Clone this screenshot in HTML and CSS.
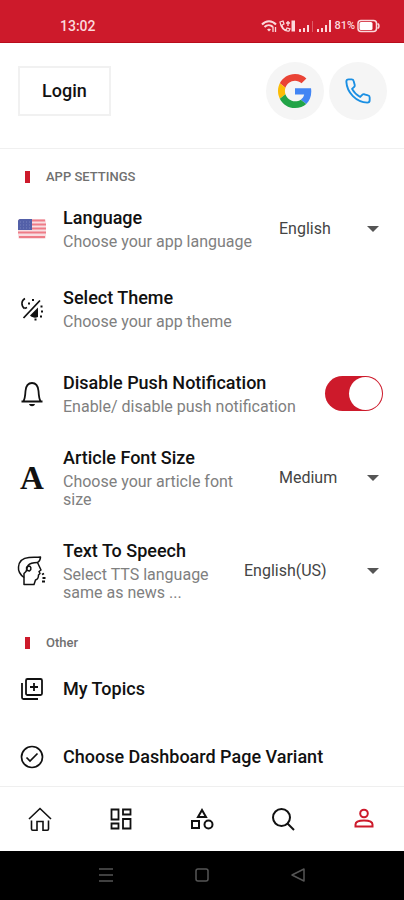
FILE: index.html
```html
<!DOCTYPE html>
<html lang="en">
<head>
    <meta charset="UTF-8">
    <meta name="viewport" content="width=device-width, initial-scale=1.0">
    <title>App Settings</title>
    <link rel="stylesheet" href="styles.css">
</head>
<body>
    <div class="status-bar">
        <span class="time">13:02</span>
        <div class="status-icons">
            <svg width="16" height="14" viewBox="0 0 16 14" fill="none" stroke="#fbd9dc" stroke-width="2">
                <path d="M1 5.500C5 1 11 1 15 5.500M3.500 8C6 5.500 9.500 5.500 12 8"/>
                <path d="M6 10.500l2 2 2-2-2-1z" fill="#fbd9dc" stroke="none"/>
                <path d="M12 8v5M14.500 8v5" stroke-width="1.300"/>
            </svg>
            <svg width="17" height="14" viewBox="0 0 17 14" fill="none" stroke="#fbd9dc" stroke-width="1.800">
                <path d="M1 3l3-1 1 3-2 1c.5 3 2 4.500 4 5l1-2 3 1-1 2c-5 .5-8-3-9-9z" stroke-width="1.300"/>
                <path d="M7 4h4M9 2v5" stroke-width="1.400"/>
                <path d="M12.500 1.500h3.500v11h-3.500z" fill="#fbd9dc" stroke="none"/>
            </svg>
            <svg width="16" height="14" viewBox="0 0 16 14" fill="#fbd9dc">
                <path d="M1 10h2v3H1zM5 9h2v4H5zM9 6h2v7H9z"/>
                <path d="M14 2h1v11h-1z" opacity=".35"/>
            </svg>
            <svg width="16" height="14" viewBox="0 0 16 14" fill="#fbd9dc">
                <path d="M1 10h2v3H1zM5 9h2v4H5zM9 6h2v7H9zM13 1h2v12h-2z"/>
            </svg>
            <span class="percent">81%</span>
            <svg width="23" height="14" viewBox="0 0 23 14">
                <rect x="1" y="1.500" width="18.500" height="11" rx="3" fill="none" stroke="#fbd9dc" stroke-width="1.500"/>
                <rect x="2.500" y="3" width="13" height="8" rx="1.500" fill="#fff"/>
                <path d="M20.500 4.500c2 1 2 4 0 5" fill="none" stroke="#fbd9dc" stroke-width="1.500"/>
            </svg>
        </div>
    </div>

    <header class="header">
        <button class="login">Login</button>
        <div class="social">
            <button class="round" aria-label="Sign in with Google">
                <svg width="34" height="34" viewBox="0 0 48 48">
                    <path fill="#ea4335" d="M24 9.500c3.540 0 6.710 1.220 9.210 3.600l6.850-6.850C35.900 2.380 30.470 0 24 0 14.620 0 6.510 5.380 2.560 13.220l7.980 6.190C12.430 13.720 17.740 9.500 24 9.500z"/>
                    <path fill="#4285f4" d="M46.980 24.550c0-1.570-.15-3.090-.38-4.550H24v9.020h12.940c-.58 2.960-2.260 5.480-4.780 7.180l7.730 6c4.510-4.180 7.090-10.360 7.090-17.650z"/>
                    <path fill="#fbbc05" d="M10.530 28.590c-.48-1.450-.76-2.990-.76-4.590s.27-3.140.76-4.590l-7.980-6.190C.92 16.460 0 20.120 0 24c0 3.880.92 7.540 2.560 10.780l7.970-6.190z"/>
                    <path fill="#22a447" d="M24 48c6.480 0 11.930-2.130 15.890-5.810l-7.730-6c-2.150 1.450-4.920 2.300-8.160 2.300-6.260 0-11.570-4.220-13.470-9.910l-7.980 6.190C6.510 42.620 14.620 48 24 48z"/>
                </svg>
            </button>
            <button class="round" aria-label="Sign in with phone">
                <svg width="28" height="28" viewBox="0 0 24 24" fill="none" stroke="#1a8fe3" stroke-width="1.600" stroke-linejoin="round">
                    <path d="M4 2h2.600c.8 0 1.400.5 1.600 1.300l1 3.600c.1.600 0 1.200-.5 1.600L6.900 10.200c1.600 3 4 5.200 7 6.900l1.700-1.800c.5-.5 1.100-.7 1.800-.5l3.200 1c.9.200 1.400.9 1.400 1.700V20c0 1.200-.8 2-2 2C10.500 21.500 2.500 13.500 2 4c0-1.200.8-2 2-2z"/>
                </svg>
            </button>
        </div>
    </header>

    <main class="settings">
        <h2 class="section-title">APP SETTINGS</h2>

        <div class="row">
            <span class="icon">
                <svg width="28" height="20" viewBox="0 0 28 20">
                    <rect width="28" height="20" rx="2" fill="#f8dfe2"/>
                    <path d="M1 1.500h26M0 5.500h28M0 9.500h28M0 13.500h28M1 18h26" stroke="#ee7c87" stroke-width="2"/>
                    <path d="M2 0h12v11H0V2c0-1 1-2 2-2z" fill="#5360a8"/>
                    <path d="M2 3h10M2 6h10M2 9h10" stroke="#7982bd" stroke-dasharray="1 2"/>
                </svg>
            </span>
            <div class="text">
                <label class="title" for="language">Language</label>
                <p>Choose your app language</p>
            </div>
            <div class="dropdown">
                <select id="language"><option>English</option></select>
                <svg class="arrow" width="12" height="6" viewBox="0 0 12 6"><path d="M0 0h12L6 6z"/></svg>
            </div>
        </div>

        <div class="row theme">
            <span class="icon">
                <svg width="24" height="24" viewBox="0 0 24 24" fill="none" stroke="#111" stroke-width="1.800">
                    <path d="M3.500 21L20 3.500"/>
                    <path d="M5 1.500C1 3.500 1 9 4.500 11.500" stroke-width="1.600"/>
                    <path d="M4.500 11.500l2.500-1" stroke-width="1.600"/>
                    <path d="M8 6.500h2M12 3h2" stroke-width="2"/>
                    <path d="M18 10.500v9.500c-3 1.500-6 .5-8-1.500z" fill="#111" stroke="none"/>
                    <path d="M20.500 9.500h2M21 14.500h2M20 19.500h2M14.500 22.500h2" stroke-width="2"/>
                </svg>
            </span>
            <div class="text">
                <span class="title">Select Theme</span>
                <p>Choose your app theme</p>
            </div>
        </div>

        <div class="row">
            <span class="icon">
                <svg width="24" height="26" viewBox="0 0 24 26" fill="none" stroke="#111" stroke-width="1.800">
                    <path d="M1.500 20.500h21M3.500 20c1.500-2 1.700-5 2-10C6 4.500 8.500 2 12 2s6 2.500 6.500 8c.3 5 .5 8 2 10"/>
                    <path d="M9 23h6c-.5 1.500-1.500 2.200-3 2.200S9.500 24.500 9 23z" fill="#111" stroke="none"/>
                </svg>
            </span>
            <div class="text">
                <label class="title" for="push">Disable Push Notification</label>
                <p>Enable/ disable push notification</p>
            </div>
            <input class="switch" type="checkbox" id="push" checked>
        </div>

        <div class="row">
            <span class="icon letter">A</span>
            <div class="text">
                <label class="title" for="font-size">Article Font Size</label>
                <p>Choose your article font size</p>
            </div>
            <div class="dropdown">
                <select id="font-size"><option>Medium</option></select>
                <svg class="arrow" width="12" height="6" viewBox="0 0 12 6"><path d="M0 0h12L6 6z"/></svg>
            </div>
        </div>

        <div class="row">
            <span class="icon">
                <svg width="30" height="30" viewBox="0 0 30 30" fill="none" stroke="#111" stroke-width="1.500" stroke-linejoin="round">
                    <path d="M7 28.500v-7C3 18.500 1 15.500 1.500 11 2 5.500 6 2 12 1.500c4-.3 8 0 11.500-.5 0 3-1.500 4.500-3 5.500l3.500 7.500-2 1.500 1 2-1.500 1.500c0 3-1 4.500-3 5l-1.500 4.500z"/>
                    <path d="M20.500 6.500c-4 0-7 0-9.500 3l-2 6-2 2v4M12.500 15c-3.500 0-4-4.500-1-5 2.500 0 3.500 3 1 5z"/>
                    <path d="M25 18.500l2-1M25.500 22h3M25 25.500h3" stroke-width="1.800"/>
                </svg>
            </span>
            <div class="text">
                <label class="title" for="tts">Text To Speech</label>
                <p>Select TTS language same as news ...</p>
            </div>
            <div class="dropdown wide">
                <select id="tts"><option>English(US)</option></select>
                <svg class="arrow" width="12" height="6" viewBox="0 0 12 6"><path d="M0 0h12L6 6z"/></svg>
            </div>
        </div>

        <h2 class="section-title">Other</h2>

        <a class="row link" href="#">
            <span class="icon">
                <svg width="24" height="24" viewBox="0 0 24 24" fill="none" stroke="#111" stroke-width="1.800">
                    <rect x="6" y="2" width="16" height="16" rx="1.500"/>
                    <path d="M14 6v8M10 10h8M2 6v14.500c0 .8.700 1.500 1.500 1.500H18"/>
                </svg>
            </span>
            <span class="title">My Topics</span>
        </a>

        <a class="row link" href="#">
            <span class="icon">
                <svg width="24" height="24" viewBox="0 0 24 24" fill="none" stroke="#111" stroke-width="1.700">
                    <circle cx="12" cy="12" r="10.500"/>
                    <path d="M6.500 12.500l3.500 3.500 7.500-7.500"/>
                </svg>
            </span>
            <span class="title">Choose Dashboard Page Variant</span>
        </a>
    </main>

    <nav class="tabs">
        <a href="#" aria-label="Home">
            <svg width="26" height="26" viewBox="0 0 26 26" fill="none" stroke="#111" stroke-width="1.600">
                <path d="M2 13L13 2.500 24 13M4.500 14.500V23c0 .8.500 1.200 1.200 1.200H10V15.500h6v8.700h4.300c.7 0 1.200-.4 1.200-1.200v-8.500"/>
            </svg>
        </a>
        <a href="#" aria-label="Dashboard">
            <svg width="24" height="24" viewBox="0 0 24 24" fill="none" stroke="#111" stroke-width="1.800">
                <path d="M2.500 2.500h7v10h-7zM14 2.500h7.500v5H14zM14 12h7.500v9.500H14zM2.500 16.500h7v5h-7z"/>
            </svg>
        </a>
        <a href="#" aria-label="Categories">
            <svg width="24" height="24" viewBox="0 0 24 24" fill="none" stroke="#111" stroke-width="2">
                <path d="M12 3l4 7H8zM2 14h7v7H2z"/>
                <circle cx="18.500" cy="17.500" r="4"/>
            </svg>
        </a>
        <a href="#" aria-label="Search">
            <svg width="24" height="24" viewBox="0 0 24 24" fill="none" stroke="#111" stroke-width="2">
                <circle cx="10.500" cy="10.500" r="8.500"/>
                <path d="M16.500 16.500l6.500 6.500"/>
            </svg>
        </a>
        <a href="#" aria-label="Profile">
            <svg width="22" height="22" viewBox="0 0 22 22" fill="none" stroke="#cd1a2b" stroke-width="2">
                <circle cx="11" cy="5.500" r="3.800"/>
                <path d="M2.500 18.500v-2c0-3 4.500-4 8.500-4s8.500 1 8.500 4v2z"/>
            </svg>
        </a>
    </nav>

    <div class="system-bar">
        <button aria-label="Recent apps">
            <svg width="16" height="16" viewBox="0 0 16 16" stroke="#555" stroke-width="1.500"><path d="M1 2h14M1 8h14M1 14h14"/></svg>
        </button>
        <button aria-label="Home screen">
            <svg width="16" height="16" viewBox="0 0 16 16" fill="none" stroke="#555" stroke-width="1.500"><rect x="2" y="2" width="12" height="12" rx="2"/></svg>
        </button>
        <button aria-label="Back">
            <svg width="16" height="16" viewBox="0 0 16 16" fill="none" stroke="#555" stroke-width="1.500" stroke-linejoin="round"><path d="M14 2v12L2 8z"/></svg>
        </button>
    </div>
</body>
</html>
```
FILE: styles.css
```css
* {
    margin: 0;
    padding: 0;
    box-sizing: border-box;
    font-family: Roboto, sans-serif;
}

body {
    display: flex;
    flex-direction: column;
    height: 100vh;
    background: #fff;
    color: #111;
}

button {
    border: none;
    background: none;
    cursor: pointer;
}

a {
    color: inherit;
    text-decoration: none;
}

svg {
    display: block;
    flex-shrink: 0;
}

.status-bar {
    display: flex;
    justify-content: space-between;
    align-items: center;
    padding: 13px 24px 3px 60px;
    line-height: 26px;
    background: #cd1a2b;
    border-bottom: 1px solid #b80d1c;
    color: #fbd9dc;
}

.time {
    font-size: 14px;
    font-weight: 500;
}

.status-icons {
    display: flex;
    align-items: center;
    gap: 2px;
}

.percent {
    font-size: 11px;
    font-weight: 500;
}

.header {
    display: flex;
    justify-content: space-between;
    align-items: center;
    padding: 19px 17px 28px 18px;
    border-bottom: 1px solid #f0f0f0;
}

.login {
    padding: 12px 22px;
    border: 2px solid #f1f1f1;
    background: #fff;
    color: #111;
    font-size: 18px;
    font-weight: 500;
    line-height: 22px;
}

.social {
    display: flex;
    gap: 5px;
}

.round {
    display: flex;
    justify-content: center;
    align-items: center;
    width: 58px;
    height: 58px;
    border-radius: 50%;
    background: #f5f5f5;
}

.settings {
    flex: 1;
    min-height: 0;
    overflow-y: auto;
    scrollbar-width: none;
}

.section-title {
    display: flex;
    align-items: center;
    gap: 16px;
    padding: 16px 25px 0;
    color: #707070;
    font-size: 13px;
    font-weight: 500;
    line-height: 24px;
}

.section-title::before {
    content: '';
    width: 5px;
    height: 12px;
    background: #cd1a2b;
}

.row {
    display: flex;
    align-items: center;
    padding: 17px 21px 13px 18px;
}

.row.theme {
    margin: 5px 0 10px;
}

.row.link {
    padding: 22px 21px 22px 18px;
}

.icon {
    display: flex;
    justify-content: center;
    flex-shrink: 0;
    width: 28px;
    margin-right: 17px;
}

.letter {
    font-family: "Liberation Serif", serif;
    font-size: 33px;
    font-weight: 700;
    line-height: 34px;
}

.text {
    flex: 1;
}

.title {
    display: block;
    font-size: 18px;
    font-weight: 500;
    line-height: 24px;
}

.text p {
    margin-top: 3px;
    color: #808080;
    font-size: 16px;
    line-height: 18px;
}

.dropdown {
    display: grid;
    align-items: center;
    width: 104px;
    margin-left: 24px;
}

.dropdown.wide {
    width: 139px;
}

.dropdown select,
.dropdown .arrow {
    grid-area: 1 / 1;
}

.dropdown select {
    appearance: none;
    width: 100%;
    border: none;
    background: transparent;
    color: #444;
    font-size: 16px;
    line-height: 24px;
}

.dropdown .arrow {
    justify-self: end;
    margin-right: 4px;
    fill: #555;
    pointer-events: none;
}

.switch {
    appearance: none;
    flex-shrink: 0;
    width: 58px;
    height: 35px;
    padding: 1px;
    border-radius: 18px;
    background: #cd1a2b;
    cursor: pointer;
}

.switch::before {
    content: '';
    display: block;
    width: 33px;
    height: 33px;
    border-radius: 50%;
    background: #fff;
}

.switch:checked::before {
    margin-left: auto;
}

.switch:not(:checked) {
    background: #bbb;
}

.tabs {
    display: flex;
    align-items: center;
    height: 65px;
    border-top: 1px solid #efefef;
    background: #fff;
}

.tabs a {
    display: flex;
    flex: 1;
    justify-content: center;
}

.system-bar {
    display: flex;
    justify-content: center;
    gap: 80px;
    padding: 16px 0 17px;
    background: #000;
}
```
